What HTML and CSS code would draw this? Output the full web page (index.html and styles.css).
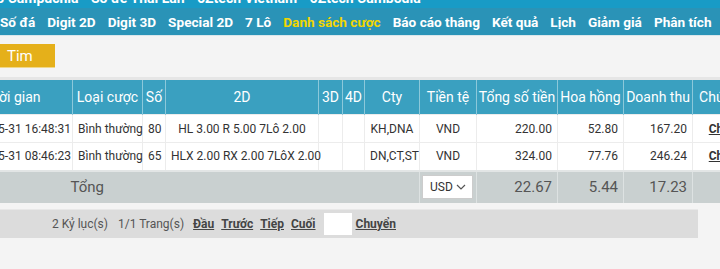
FILE: index.html
```html
<!DOCTYPE html>
<html lang="vi">
<head>
    <meta charset="UTF-8">
    <meta name="viewport" content="width=device-width, initial-scale=1.0">
    <title>Danh sách cược</title>
    <link rel="stylesheet" href="styles.css">
</head>
<body>
    <div class="topbar">
      <span>Xổ số Campuchia - Sổ đề Thái Lan - 6Ztech Vietnam - 6Ztech Cambodia</span>
    </div>
    <div class="nav">
      <a href="#">Số đá</a>
      <a href="#">Digit 2D</a>
      <a href="#">Digit 3D</a>
      <a href="#">Special 2D</a>
      <a href="#">7 Lô</a>
      <a href="#" class="active">Danh sách cược</a>
      <a href="#">Báo cáo thắng</a>
      <a href="#">Kết quả</a>
      <a href="#">Lịch</a>
      <a href="#">Giảm giá</a>
      <a href="#">Phân tích</a>
    </div>

    <div class="content">
      <div class="search">
        <button class="btn-search">Tim</button>
      </div>

      <table class="bets">
        <colgroup>
          <col style="width:121px">
          <col style="width:70px">
          <col style="width:23px">
          <col style="width:153px">
          <col style="width:24px">
          <col style="width:22px">
          <col style="width:55px">
          <col style="width:57px">
          <col style="width:81px">
          <col style="width:66px">
          <col style="width:69px">
          <col style="width:71px">
        </colgroup>
        <thead>
          <tr>
            <th>Thời gian</th>
            <th>Loại cược</th>
            <th>Số</th>
            <th>2D</th>
            <th>3D</th>
            <th>4D</th>
            <th>Cty</th>
            <th>Tiền tệ</th>
            <th>Tổng số tiền</th>
            <th>Hoa hồng</th>
            <th>Doanh thu</th>
            <th>Chứng từ</th>
          </tr>
        </thead>
        <tbody>
          <tr>
            <td class="time">2024-05-31 16:48:31</td>
            <td>Bình thường</td>
            <td>80</td>
            <td>HL 3.00 R 5.00 7Lô 2.00</td>
            <td></td>
            <td></td>
            <td>KH,DNA</td>
            <td>VND</td>
            <td class="num">220.00</td>
            <td class="num">52.80</td>
            <td class="num">167.20</td>
            <td><a href="#" class="link">Chi tiết</a></td>
          </tr>
          <tr>
            <td class="time">2024-05-31 08:46:23</td>
            <td>Bình thường</td>
            <td>65</td>
            <td>HLX 2.00 RX 2.00 7LôX 2.00</td>
            <td></td>
            <td></td>
            <td>DN,CT,ST</td>
            <td>VND</td>
            <td class="num">324.00</td>
            <td class="num">77.76</td>
            <td class="num">246.24</td>
            <td><a href="#" class="link">Chi tiết</a></td>
          </tr>
        </tbody>
        <tfoot>
          <tr>
            <td colspan="7" class="total-label">Tổng</td>
            <td>
              <div class="currency">
                <span>USD</span>
                <svg width="10" height="6" viewBox="0 0 10 6"><path d="M1 1l4 4 4-4" fill="none" stroke="#555" stroke-width="1.2"/></svg>
              </div>
            </td>
            <td class="num">22.67</td>
            <td class="num">5.44</td>
            <td class="num">17.23</td>
            <td></td>
          </tr>
        </tfoot>
      </table>

      <div class="pager">
        <span>2 Kỷ lục(s)</span>
        <span class="pages">1/1 Trang(s)</span>
        <a href="#">Đầu</a>
        <a href="#">Trước</a>
        <a href="#">Tiếp</a>
        <a href="#">Cuối</a>
        <input type="text" class="page-input">
        <a href="#">Chuyển</a>
      </div>
    </div>
</body>
</html>
```

FILE: styles.css
```css
* {
    box-sizing: border-box;
}

body {
    margin: 0;
    background-color: #f4f4f4;
    font-family: Roboto, "Liberation Sans", sans-serif;
    overflow: hidden;
}

.topbar {
    height: 8px;
    overflow: hidden;
    background-color: #189bc6;
}

.topbar span {
    display: block;
    margin-top: -10px;
    margin-left: -31px;
    line-height: 16px;
    font-size: 14px;
    font-weight: 700;
    color: #fff;
    white-space: nowrap;
}

.nav {
    display: flex;
    align-items: center;
    gap: 12px;
    height: 28px;
    background-color: #2a93b7;
    border-bottom: 1px solid #d9e6eb;
    white-space: nowrap;
}

.nav a {
    color: #fff;
    font-size: 13.6px;
    font-weight: 700;
    text-decoration: none;
}

.nav a.active {
    color: #f2d600;
}

.content {
    margin-left: -49px;
    width: 880px;
}

.search {
    padding-top: 8px;
    height: 41px;
}

.btn-search {
    margin-left: 46px;
    width: 58px;
    height: 24px;
    padding: 0 0 0 10px;
    text-align: left;
    background-color: #e5b01a;
    border: none;
    border-bottom: 1px solid #f0d88a;
    color: #fff;
    font-family: Roboto, "Liberation Sans", sans-serif;
    font-size: 15px;
}

.bets {
    table-layout: fixed;
    border-collapse: collapse;
    width: 812px;
    border-top: 3px solid #e6e6e6;
}

.bets th {
    height: 36px;
    padding: 0;
    background-color: #3aa0c0;
    border-right: 1px solid #8cc8da;
    color: #fff;
    font-size: 14px;
    font-weight: 400;
    white-space: nowrap;
}

.bets td {
    padding: 0 5px;
    background-color: #fff;
    border: 1px solid #ececec;
    color: #333;
    font-size: 12px;
    text-align: center;
    white-space: nowrap;
}

.bets td.time {
    padding: 0 0 0 8px;
}

.bets tbody tr {
    height: 28px;
}

.bets td.num {
    text-align: right;
}

.link {
    color: #333;
    font-weight: 700;
}

.bets tfoot tr {
    height: 32px;
}

.bets tfoot td {
    background-color: #c9d0d0;
    border: none;
    border-left: 1px solid #dde2e2;
    border-top: 2px solid #e2e5e5;
    color: #555;
    font-size: 15px;
}

.bets tfoot td.total-label {
    text-align: left;
    padding-left: 119px;
    border-left: none;
}

.currency {
    display: flex;
    align-items: center;
    justify-content: space-between;
    width: 51px;
    height: 24px;
    margin-left: -3px;
    padding: 0 6px 0 7px;
    background-color: #fff;
    border: 1px solid #ccc;
    font-size: 12px;
    color: #333;
}

.pager {
    display: flex;
    align-items: center;
    gap: 7px;
    width: 747px;
    height: 29px;
    margin-top: 6px;
    padding-left: 101px;
    background-color: #dcdcdc;
    border-top: 1px solid #e8e8e8;
    font-size: 12px;
    color: #555;
}

.pager .pages {
    margin-left: 3px;
    margin-right: 2px;
}

.pager a {
    color: #444;
    font-weight: 700;
}

.page-input {
    width: 28px;
    height: 22px;
    margin: 0 -3px 0 1px;
    border: none;
    background-color: #fff;
}
```
